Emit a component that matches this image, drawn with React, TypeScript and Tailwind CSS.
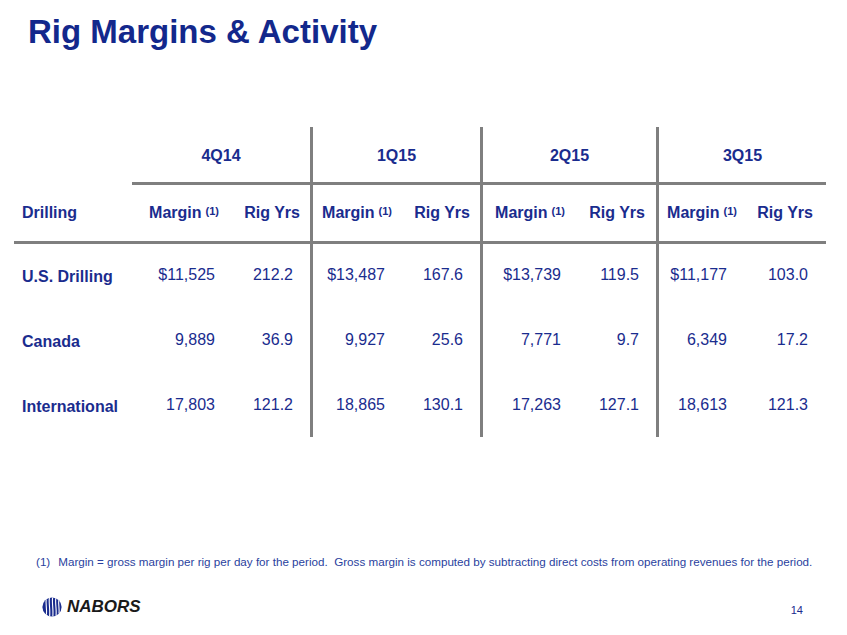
import React from "react";

interface Quarter {
  label: string;
  // cell classes, written out in full so Tailwind sees them
  wrap: string;
  marginCell: string;
  rigCell: string;
  marginHead: string;
  rigHead: string;
  marginVal: string;
  rigVal: string;
}

const QUARTERS: Quarter[] = [
  {
    label: "4Q14",
    wrap: "w-[178px]",
    marginCell: "w-[93px]",
    rigCell: "w-[85px]",
    marginHead: "pr-[6px]",
    rigHead: "pr-[10px]",
    marginVal: "pr-[10px]",
    rigVal: "pr-[17px]",
  },
  {
    label: "1Q15",
    wrap: "w-[170px] border-l-[3px] border-[#7f7f7f]",
    marginCell: "w-[87px]",
    rigCell: "w-[80px]",
    marginHead: "pr-[8px]",
    rigHead: "pr-[10px]",
    marginVal: "pr-[15px]",
    rigVal: "pr-[17px]",
  },
  {
    label: "2Q15",
    wrap: "w-[176px] border-l-[3px] border-[#7f7f7f]",
    marginCell: "w-[89px]",
    rigCell: "w-[84px]",
    marginHead: "pr-[7px]",
    rigHead: "pr-[11px]",
    marginVal: "pr-[11px]",
    rigVal: "pr-[17px]",
  },
  {
    label: "3Q15",
    wrap: "w-[170px] border-l-[3px] border-[#7f7f7f]",
    marginCell: "w-[86px]",
    rigCell: "w-[81px]",
    marginHead: "pr-[8px]",
    rigHead: "pr-[13px]",
    marginVal: "pr-[18px]",
    rigVal: "pr-[18px]",
  },
];

const ROWS = [
  {
    name: "U.S. Drilling",
    height: "h-[65px]",
    values: [
      ["$11,525", "212.2"],
      ["$13,487", "167.6"],
      ["$13,739", "119.5"],
      ["$11,177", "103.0"],
    ],
  },
  {
    name: "Canada",
    height: "h-[65px]",
    values: [
      ["9,889", "36.9"],
      ["9,927", "25.6"],
      ["7,771", "9.7"],
      ["6,349", "17.2"],
    ],
  },
  {
    name: "International",
    height: "h-[63px]",
    values: [
      ["17,803", "121.2"],
      ["18,865", "130.1"],
      ["17,263", "127.1"],
      ["18,613", "121.3"],
    ],
  },
];

function NaborsMark() {
  return (
    <svg width="20" height="20" viewBox="0 0 20 20">
      <circle cx="10" cy="10" r="9.6" fill="#1a2c8e" />
      <g fill="none" stroke="#ffffff" strokeWidth="1.1">
        <path d="M4.2 2.5 C3.4 7 5.2 12 4.4 17.6" />
        <path d="M7.4 0.8 C6.6 6 8.4 13 7.6 19.2" />
        <path d="M10.6 0.6 C9.8 6 11.6 13 10.8 19.4" />
        <path d="M13.8 1.2 C13 6 14.8 13 14 18.8" />
        <path d="M16.8 3.2 C16.2 7 17.6 12 17 16.6" />
      </g>
    </svg>
  );
}

export default function App() {
  return (
    <div className="relative h-[635px] w-[847px] overflow-hidden bg-white font-['Liberation_Sans',Arial,sans-serif] text-[#1a2c8e]">
      {/* Title */}
      <h1 className="ml-[28px] mt-[15px] text-[33px] font-bold leading-[33px] text-[#13288c]">
        Rig Margins &amp; Activity
      </h1>

      {/* Table */}
      <div className="ml-[14px] mt-[79px] w-[812px]">
        {/* Quarter headers */}
        <div className="flex">
          <div className="w-[118px]" />
          <div className="flex border-b-[3px] border-[#7f7f7f]">
            {QUARTERS.map((q) => (
              <div
                key={q.label}
                className={`flex h-[55px] items-center justify-center pt-[3px] text-[16px] font-bold leading-[18px] ${q.wrap}`}
              >
                {q.label}
              </div>
            ))}
          </div>
        </div>

        {/* Column headers */}
        <div className="flex border-b-[3px] border-[#7f7f7f] text-[16px] font-bold leading-[18px]">
          <div className="flex h-[56px] w-[118px] items-center pl-[8px]">Drilling</div>
          {QUARTERS.map((q) => (
            <div key={q.label} className={`flex h-[56px] ${q.wrap}`}>
              <div className={`flex items-center justify-end ${q.marginCell} ${q.marginHead}`}>
                Margin
                <sup className="relative -top-[2px] ml-[4px] text-[11px]">(1)</sup>
              </div>
              <div className={`flex items-center justify-end ${q.rigCell} ${q.rigHead}`}>
                Rig Yrs
              </div>
            </div>
          ))}
        </div>

        {/* Data rows */}
        {ROWS.map((r) => (
          <div key={r.name} className={`flex text-[16px] leading-[18px] ${r.height}`}>
            <div className="w-[118px] pl-[8px] pt-[24px] font-bold">{r.name}</div>
            {QUARTERS.map((q, i) => (
              <div key={q.label} className={`flex ${q.wrap}`}>
                <div className={`pt-[22px] text-right ${q.marginCell} ${q.marginVal}`}>
                  {r.values[i][0]}
                </div>
                <div className={`pt-[22px] text-right ${q.rigCell} ${q.rigVal}`}>
                  {r.values[i][1]}
                </div>
              </div>
            ))}
          </div>
        ))}
      </div>

      {/* Footnote */}
      <p className="ml-[36px] mt-[118px] whitespace-nowrap text-[11.65px] leading-[14px] text-[#2a3f9e]">
        <span className="mr-[8px]">(1)</span>
        Margin = gross margin per rig per day for the period.&nbsp; Gross margin is computed by
        subtracting direct costs from operating revenues for the period.
      </p>

      {/* Footer */}
      <div className="ml-[42px] mt-[27px] flex w-[761px] items-center">
        <NaborsMark />
        <span className="ml-[5px] text-[17px] font-bold italic leading-[20px] text-[#1a1a1a]">
          NABORS
        </span>
        <span className="ml-auto mt-[6px] text-[11px] text-[#1a2c8e]">14</span>
      </div>
    </div>
  );
}
